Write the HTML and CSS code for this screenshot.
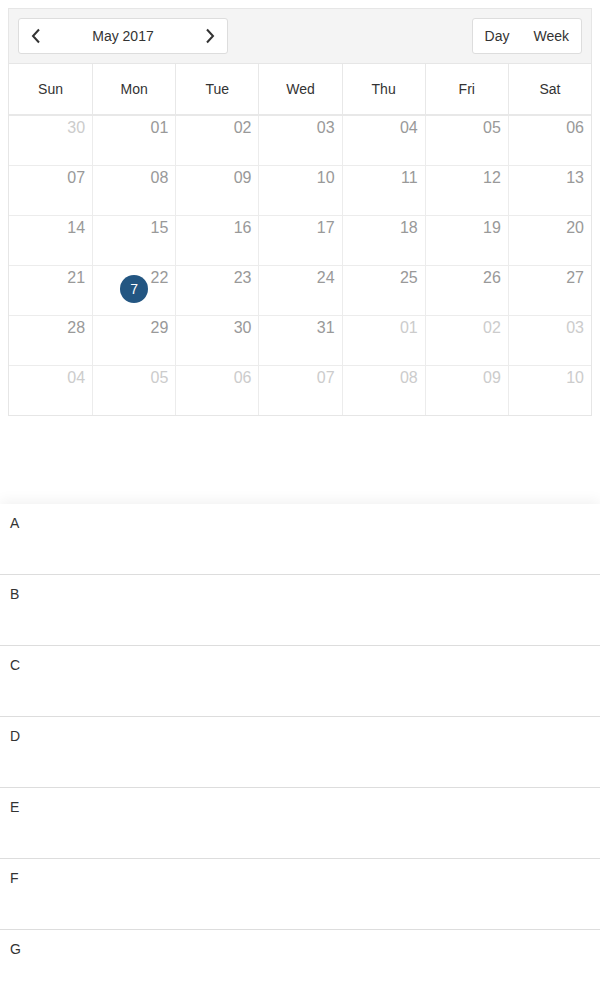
FILE: index.html
```html
<!DOCTYPE html>
<html>
<head>
<meta charset="utf-8">
<link rel="stylesheet" href="styles.css">
</head>
<body>
<div class="calendar">
  <div class="cal-header">
    <div class="nav-btn">
      <span class="chev">
        <svg width="10" height="16" viewBox="0 0 10 16"><path d="M8 1.5 L2 8 L8 14.5" fill="none" stroke="#333" stroke-width="2"/></svg>
      </span>
      <span class="month">May 2017</span>
      <span class="chev">
        <svg width="10" height="16" viewBox="0 0 10 16"><path d="M2 1.5 L8 8 L2 14.5" fill="none" stroke="#333" stroke-width="2"/></svg>
      </span>
    </div>
    <div class="view-btns">
      <span class="view">Day</span>
      <span class="view">Week</span>
    </div>
  </div>
  <div class="weekdays">
    <div class="wd">Sun</div><div class="wd">Mon</div><div class="wd">Tue</div><div class="wd">Wed</div><div class="wd">Thu</div><div class="wd">Fri</div><div class="wd">Sat</div>
  </div>
  <div class="week">
    <div class="day other">30</div><div class="day">01</div><div class="day">02</div><div class="day">03</div><div class="day">04</div><div class="day">05</div><div class="day">06</div>
  </div>
  <div class="week">
    <div class="day">07</div><div class="day">08</div><div class="day">09</div><div class="day">10</div><div class="day">11</div><div class="day">12</div><div class="day">13</div>
  </div>
  <div class="week">
    <div class="day">14</div><div class="day">15</div><div class="day">16</div><div class="day">17</div><div class="day">18</div><div class="day">19</div><div class="day">20</div>
  </div>
  <div class="week">
    <div class="day">21</div><div class="day">22<span class="badge">7</span></div><div class="day">23</div><div class="day">24</div><div class="day">25</div><div class="day">26</div><div class="day">27</div>
  </div>
  <div class="week">
    <div class="day">28</div><div class="day">29</div><div class="day">30</div><div class="day">31</div><div class="day other">01</div><div class="day other">02</div><div class="day other">03</div>
  </div>
  <div class="week">
    <div class="day other">04</div><div class="day other">05</div><div class="day other">06</div><div class="day other">07</div><div class="day other">08</div><div class="day other">09</div><div class="day other">10</div>
  </div>
</div>
<div class="list">
  <div class="item">A</div>
  <div class="item">B</div>
  <div class="item">C</div>
  <div class="item">D</div>
  <div class="item">E</div>
  <div class="item">F</div>
  <div class="item">G</div>
</div>
</body>
</html>
```
FILE: styles.css
```css
html, body {
  margin: 0;
  padding: 0;
  background: #fff;
  font-family: "Liberation Sans", Arial, sans-serif;
  color: #333;
}
.calendar {
  margin: 8px 8px 0 8px;
  border: 1px solid #e6e6e6;
}
.cal-header {
  background: #f4f4f4;
  height: 54px;
  padding: 9px 9px;
  box-sizing: border-box;
  display: flex;
  justify-content: space-between;
  align-items: center;
  border-bottom: 1px solid #e6e6e6;
  box-sizing: content-box;
  padding: 0 9px;
}
.nav-btn {
  width: 210px;
  height: 36px;
  box-sizing: border-box;
  background: #fff;
  border: 1px solid #ddd;
  border-radius: 3px;
  display: flex;
  align-items: center;
  justify-content: space-between;
  padding: 0 12px;
  font-size: 14px;
}
.chev {
  display: flex;
  align-items: center;
}
.month {
  font-size: 14px;
  color: #333;
}
.view-btns {
  height: 36px;
  box-sizing: border-box;
  background: #fff;
  border: 1px solid #ddd;
  border-radius: 3px;
  display: flex;
  align-items: center;
  font-size: 14px;
}
.view {
  padding: 0 12px;
}
.weekdays {
  display: grid;
  grid-template-columns: repeat(7, 1fr);
  border-bottom: 2px solid #e8e8e8;
}
.wd {
  height: 50px;
  display: flex;
  align-items: center;
  justify-content: center;
  font-size: 14px;
  color: #333;
  border-left: 1px solid #e8e8e8;
}
.wd:first-child, .day:first-child {
  border-left: none;
}
.week {
  display: grid;
  grid-template-columns: repeat(7, 1fr);
  border-bottom: 1px solid #ececec;
}
.week:last-child {
  border-bottom: none;
}
.day {
  position: relative;
  height: 49px;
  box-sizing: border-box;
  padding: 3px 7px 0 0;
  text-align: right;
  font-size: 16px;
  color: #999;
  border-left: 1px solid #ececec;
}
.day.other {
  color: #ccc;
}
.badge {
  position: absolute;
  left: 27px;
  top: 9px;
  width: 28px;
  height: 28px;
  border-radius: 50%;
  background: #235682;
  color: #fff;
  font-size: 14px;
  display: flex;
  align-items: center;
  justify-content: center;
}
.list {
  margin-top: 88px;
  background: #fff;
  box-shadow: 0 -4px 12px rgba(0, 0, 0, 0.05);
}
.item {
  height: 71px;
  box-sizing: border-box;
  padding: 11px 10px 0 10px;
  font-size: 14px;
  color: #333;
  border-bottom: 1px solid #ddd;
}
```
